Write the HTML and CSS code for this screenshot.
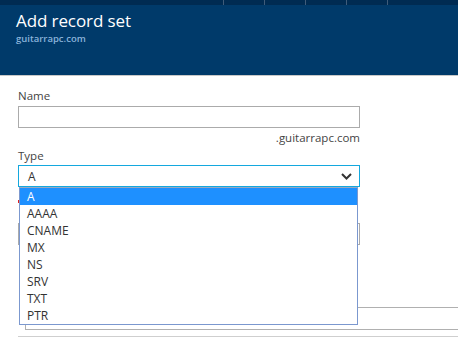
FILE: index.html
```html
<!DOCTYPE html>
<html>
<head>
<meta charset="utf-8">
<link rel="stylesheet" href="styles.css">
</head>
<body>
<div class="blade">
  <header class="header">
    <div class="topbar">
      <div class="tb-space"></div>
      <div class="tb-cell"></div>
      <div class="tb-cell"></div>
      <div class="tb-cell"></div>
      <div class="tb-cell"></div>
      <div class="tb-cell tb-last"></div>
    </div>
    <div class="titles">
      <div class="title">Add record set</div>
      <div class="subtitle">guitarrapc.com</div>
    </div>
  </header>
  <main class="content">
    <div class="label">Name</div>
    <div class="input"></div>
    <div class="suffix">.guitarrapc.com</div>
    <div class="label">Type</div>
    <div class="select-wrap">
      <div class="select">
        <span>A</span>
        <svg class="chev" width="11" height="7" viewBox="0 0 11 7"><path d="M1 1 L5.5 5.5 L10 1" fill="none" stroke="#333" stroke-width="2"/></svg>
      </div>
      <ul class="list">
        <li class="item selected">A</li>
        <li class="item">AAAA</li>
        <li class="item">CNAME</li>
        <li class="item">MX</li>
        <li class="item">NS</li>
        <li class="item">SRV</li>
        <li class="item">TXT</li>
        <li class="item">PTR</li>
      </ul>
    </div>
    <div class="req-row"><span class="req"></span></div>
    <div class="input"></div>
    <div class="box"></div>
    <div class="sep"></div>
  </main>
</div>
</body>
</html>
```
FILE: styles.css
```css
html, body {
  margin: 0;
  padding: 0;
  background: #fff;
  overflow: hidden;
  width: 458px;
  height: 359px;
}
body {
  font-family: "Open Sans", "Noto Sans", sans-serif;
  color: #444;
}
.header {
  background: #003a6a;
  height: 75px;
  border-bottom: 1px solid #c8c8c8;
}
.topbar {
  display: flex;
  height: 5px;
  background: #002b52;
}
.tb-space { width: 223px; }
.tb-cell {
  width: 40px;
  border-left: 1px solid #3f5c7a;
}
.tb-last { flex: 1; }
.titles {
  padding: 4px 0 0 16px;
}
.title {
  color: #fff;
  font-size: 17px;
  line-height: 24px;
  letter-spacing: -0.1px;
}
.subtitle {
  color: #8ab3da;
  font-size: 9.5px;
  font-weight: 600;
  line-height: 12px;
}
.content {
  padding: 12px 0 0 18px;
}
.label {
  font-size: 11.5px;
  line-height: 16px;
  height: 16px;
  color: #444;
  margin-bottom: 2px;
}
.input {
  width: 340px;
  height: 20px;
  border: 1px solid #ababab;
}
.suffix {
  width: 342px;
  text-align: right;
  font-size: 11.5px;
  line-height: 16px;
  margin: 2px 0 2px;
  color: #444;
}
.select-wrap {
  position: relative;
  width: 342px;
  margin-top: -1px;
}
.select {
  box-sizing: border-box;
  height: 22px;
  border: 1px solid #14a8de;
  display: flex;
  align-items: center;
  justify-content: space-between;
  padding: 0 7px 0 9px;
  font-size: 12px;
  color: #333;
}
.chev { display: block; }
.list {
  position: absolute;
  left: 1px;
  top: 22px;
  width: 337px;
  margin: 0;
  padding: 0;
  list-style: none;
  background: #fff;
  border: 1px solid #7b98cf;
  border-top-color: #9aa8bf;
  z-index: 2;
}
.item {
  height: 17px;
  line-height: 17px;
  padding-left: 7px;
  font-size: 12px;
  color: #333;
}
.item.selected {
  background: #1e90ff;
  color: #fff;
}
.req-row {
  height: 16px;
  margin-top: 13px;
  margin-bottom: 7px;
}
.req {
  display: block;
  width: 2px;
  height: 3px;
  margin-top: 7px;
  background: #e02020;
}
.box {
  margin-top: 62px;
  margin-left: 7px;
  height: 21px;
  border: 1px solid #b0b0b0;
  border-right: none;
}
.sep {
  margin-top: 6px;
  height: 1px;
  background: #cfcfcf;
}
```
